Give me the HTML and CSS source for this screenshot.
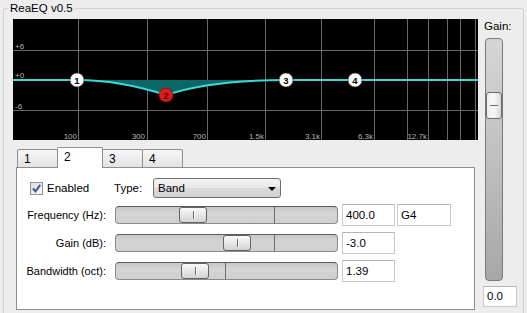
FILE: index.html
```html
<!DOCTYPE html>
<html lang="en">

<head>
    <meta charset="UTF-8">
    <title>ReaEQ v0.5</title>
    <link rel="stylesheet" href="styles.css">
</head>

<body>
    <fieldset class="group">
        <legend class="group_title">ReaEQ v0.5</legend>
        <div class="layout">
            <div class="main">
                <svg class="graph" width="465" height="121" viewBox="0 0 465 121">
                    <rect width="465" height="121" fill="#000" />
                    <g class="grid">
                        <line x1="0" y1="31.5" x2="465" y2="31.5" />
                        <line x1="0" y1="61.5" x2="465" y2="61.5" />
                        <line x1="0" y1="91.5" x2="465" y2="91.5" />
                        <line x1="65.5" y1="0" x2="65.5" y2="121" />
                        <line x1="134.5" y1="0" x2="134.5" y2="121" />
                        <line x1="194.5" y1="0" x2="194.5" y2="121" />
                        <line x1="252.5" y1="0" x2="252.5" y2="121" />
                        <line x1="308.5" y1="0" x2="308.5" y2="121" />
                        <line x1="361.5" y1="0" x2="361.5" y2="121" />
                        <line x1="394.5" y1="0" x2="394.5" y2="121" />
                        <line x1="415.5" y1="0" x2="415.5" y2="121" />
                        <line x1="434.5" y1="0" x2="434.5" y2="121" />
                        <line x1="447.5" y1="0" x2="447.5" y2="121" />
                        <line x1="462.5" y1="0" x2="462.5" y2="121" />
                    </g>
                    <g class="db_labels">
                        <text x="2" y="30">+6</text>
                        <text x="2" y="59">+0</text>
                        <text x="2" y="90">-6</text>
                    </g>
                    <g class="freq_labels">
                        <text x="64" y="120">100</text>
                        <text x="132" y="120">300</text>
                        <text x="193" y="120">700</text>
                        <text x="251" y="120">1.5k</text>
                        <text x="307" y="120">3.1k</text>
                        <text x="360" y="120">6.3k</text>
                        <text x="414" y="120">12.7k</text>
                    </g>
                    <path class="curve_fill" d="M64,61 C100,61 128,68 153,76 C180,67 215,61 273,61 Z" />
                    <path class="curve" d="M0,61 L64,61 C100,61 128,68 153,76 C180,67 215,61 273,61 L465,61" />
                    <g class="node">
                        <circle cx="64" cy="61" r="7" />
                        <text x="64" y="64.5">1</text>
                    </g>
                    <g class="node node_active">
                        <circle cx="153" cy="76" r="7" />
                        <text x="153" y="79.5">2</text>
                    </g>
                    <g class="node">
                        <circle cx="273" cy="61" r="7" />
                        <text x="273" y="64.5">3</text>
                    </g>
                    <g class="node">
                        <circle cx="342" cy="61" r="7" />
                        <text x="342" y="64.5">4</text>
                    </g>
                </svg>

                <div class="tabs">
                    <div class="tab">1</div>
                    <div class="tab tab_active">2</div>
                    <div class="tab">3</div>
                    <div class="tab">4</div>
                </div>

                <div class="panel">
                    <div class="top_row">
                        <label class="check">
                            <span class="check_box">
                                <svg width="11" height="11" viewBox="0 0 11 11">
                                    <path d="M2,5.5 L4.5,8.3 L9.2,1.8" fill="none" stroke="#3b5a9e" stroke-width="2" />
                                </svg>
                            </span>
                            Enabled
                        </label>
                        <span class="type_label">Type:</span>
                        <div class="select">
                            <span>Band</span>
                            <span class="select_arrow"></span>
                        </div>
                    </div>

                    <div class="param">
                        <span class="param_label">Frequency (Hz):</span>
                        <div class="track">
                            <span class="track_tick" style="left: 158px"></span>
                            <span class="thumb" style="left: 63px"></span>
                        </div>
                        <div class="field">400.0</div>
                        <div class="field field_note">G4</div>
                    </div>
                    <div class="param">
                        <span class="param_label">Gain (dB):</span>
                        <div class="track">
                            <span class="track_tick" style="left: 158px"></span>
                            <span class="thumb" style="left: 107px"></span>
                        </div>
                        <div class="field">-3.0</div>
                    </div>
                    <div class="param">
                        <span class="param_label">Bandwidth (oct):</span>
                        <div class="track">
                            <span class="track_tick" style="left: 109px"></span>
                            <span class="thumb" style="left: 65px"></span>
                        </div>
                        <div class="field">1.39</div>
                    </div>
                </div>
            </div>

            <div class="side">
                <div class="side_label">Gain:</div>
                <div class="vtrack">
                    <span class="vthumb" style="top: 53px"></span>
                </div>
                <div class="field gain_field">0.0</div>
            </div>
        </div>
    </fieldset>
</body>

</html>
```

FILE: styles.css
```css
body {
    margin: 0;
    width: 527px;
    height: 313px;
    overflow: hidden;
    background-color: #ededed;
    color: #000;
    font-family: "Liberation Sans", Arial, sans-serif;
    font-size: 11px;
}

.group {
    margin: 1px 3px 0;
    padding: 4px 4px 0 9px;
    height: 312px;
    box-sizing: border-box;
    border: 1px solid #d2d2d2;
    border-bottom: none;
    border-radius: 3px 3px 0 0;
}

.group_title {
    margin-left: -5px;
    padding: 0 2px;
    line-height: 14px;
    font-size: 11.5px;
}

.layout {
    display: flex;
}

.main {
    width: 465px;
}

.graph {
    display: block;
}

.grid line {
    stroke: #6a6a6a;
    stroke-width: 1;
}

.db_labels text,
.freq_labels text {
    fill: #b4b4b4;
    font-family: "Liberation Sans", Arial, sans-serif;
    font-size: 8px;
}

.freq_labels text {
    text-anchor: end;
}

.curve_fill {
    fill: #0c6767;
}

.curve {
    fill: none;
    stroke: #3dd8d4;
    stroke-width: 2;
}

.node circle {
    fill: #fff;
    stroke: #333;
    stroke-width: 0.6;
}

.node text {
    fill: #000;
    font-family: "Liberation Sans", Arial, sans-serif;
    font-size: 9.5px;
    font-weight: bold;
    text-anchor: middle;
}

.node_active circle {
    fill: #d91d1d;
    stroke: #8a0000;
}

.node_active text {
    fill: #5a0000;
}

/* tabs */
.tabs {
    display: flex;
    align-items: flex-end;
    height: 27px;
    padding-left: 4px;
}

.tab {
    width: 41px;
    height: 18px;
    box-sizing: border-box;
    padding: 2px 0 0 6px;
    line-height: 14px;
    font-size: 12px;
    border: 1px solid #8c8e94;
    border-bottom: none;
    border-radius: 2px 2px 0 0;
    background: linear-gradient(#f6f6f6, #e3e3e3);
    margin-left: -1px;
}

.tab:first-child {
    margin-left: 0;
}

.tab_active {
    position: relative;
    z-index: 1;
    width: 46px;
    height: 21px;
    margin-bottom: -1px;
    background: #fff;
}

/* panel */
.panel {
    margin-left: 3px;
    width: 459px;
    height: 143px;
    box-sizing: border-box;
    border: 1px solid #8c8e94;
    background-color: #fff;
    padding-top: 10px;
}

.top_row {
    display: flex;
    align-items: center;
    height: 20px;
    padding-left: 13px;
    margin-bottom: 6px;
}

.check {
    display: flex;
    align-items: center;
    width: 84px;
    font-size: 11.5px;
}

.check_box {
    width: 13px;
    height: 13px;
    box-sizing: border-box;
    margin-right: 4px;
    border: 1px solid #8e8f8f;
    background: linear-gradient(135deg, #dcdcdc, #fbfbfb);
    display: flex;
    align-items: center;
    justify-content: center;
}

.check_box svg {
    display: block;
}

.type_label {
    width: 39px;
    font-size: 11.5px;
}

.select {
    width: 128px;
    height: 20px;
    box-sizing: border-box;
    border: 1px solid #707070;
    border-radius: 3px;
    background: linear-gradient(#f3f3f3, #e8e8e8 50%, #dadada 51%, #d2d2d2);
    display: flex;
    align-items: center;
    justify-content: space-between;
    padding: 0 4px 0 4px;
    font-size: 11.5px;
}

.select_arrow {
    width: 0;
    height: 0;
    border-left: 4px solid transparent;
    border-right: 4px solid transparent;
    border-top: 4px solid #000;
    margin-top: 1px;
}

.param {
    display: flex;
    align-items: center;
    height: 22px;
    margin-bottom: 6px;
}

.param_label {
    width: 89px;
    margin-right: 9px;
    text-align: right;
    font-size: 11px;
}

.track {
    position: relative;
    width: 223px;
    height: 18px;
    margin-right: 4px;
    box-sizing: border-box;
    border: 1px solid #8a8a8a;
    border-top-color: #5c5c5c;
    border-radius: 4px;
    background: linear-gradient(#c6c6c6, #d4d4d4 40%, #d0d0d0);
}

.track_tick {
    position: absolute;
    top: 0;
    bottom: 0;
    width: 1px;
    background-color: #6c6c6c;
}

.thumb {
    position: absolute;
    top: 0;
    width: 28px;
    height: 16px;
    box-sizing: border-box;
    border: 1px solid #646464;
    border-radius: 3px;
    background: linear-gradient(#fafafa, #e6e6e6 50%, #d3d3d3);
}

.thumb::after {
    content: "";
    position: absolute;
    left: 13px;
    top: 3px;
    bottom: 3px;
    width: 1px;
    background-color: #6a6a6a;
    box-shadow: 1px 0 0 #fff;
}

.field {
    width: 53px;
    height: 22px;
    box-sizing: border-box;
    border: 1px solid #c8c8c8;
    border-top-color: #b5b5b5;
    background-color: #fff;
    padding-left: 3px;
    line-height: 20px;
    font-size: 11.5px;
}

.field_note {
    width: 54px;
    margin-left: 2px;
}

/* gain column */
.side {
    margin-left: 5px;
    width: 34px;
}

.side_label {
    padding-left: 1px;
    line-height: 14px;
    font-size: 11.5px;
}

.vtrack {
    position: relative;
    margin: 5px 0 0 2px;
    width: 18px;
    height: 243px;
    box-sizing: border-box;
    border: 1px solid #7a7a7a;
    border-radius: 4px;
    background: linear-gradient(#d5d5d5, #c4c4c4 40%, #a7a7a7);
}

.vthumb {
    position: absolute;
    left: 0;
    width: 16px;
    height: 27px;
    box-sizing: border-box;
    border: 1px solid #6a6a6a;
    border-radius: 3px;
    background: linear-gradient(90deg, #eeeeee, #f8f8f8 50%, #d8d8d8);
}

.vthumb::after {
    content: "";
    position: absolute;
    left: 3px;
    right: 3px;
    top: 12px;
    height: 1px;
    background-color: #6a6a6a;
    box-shadow: 0 1px 0 #fff;
}

.gain_field {
    width: 34px;
    margin-top: 5px;
    height: 21px;
    line-height: 19px;
}
```
